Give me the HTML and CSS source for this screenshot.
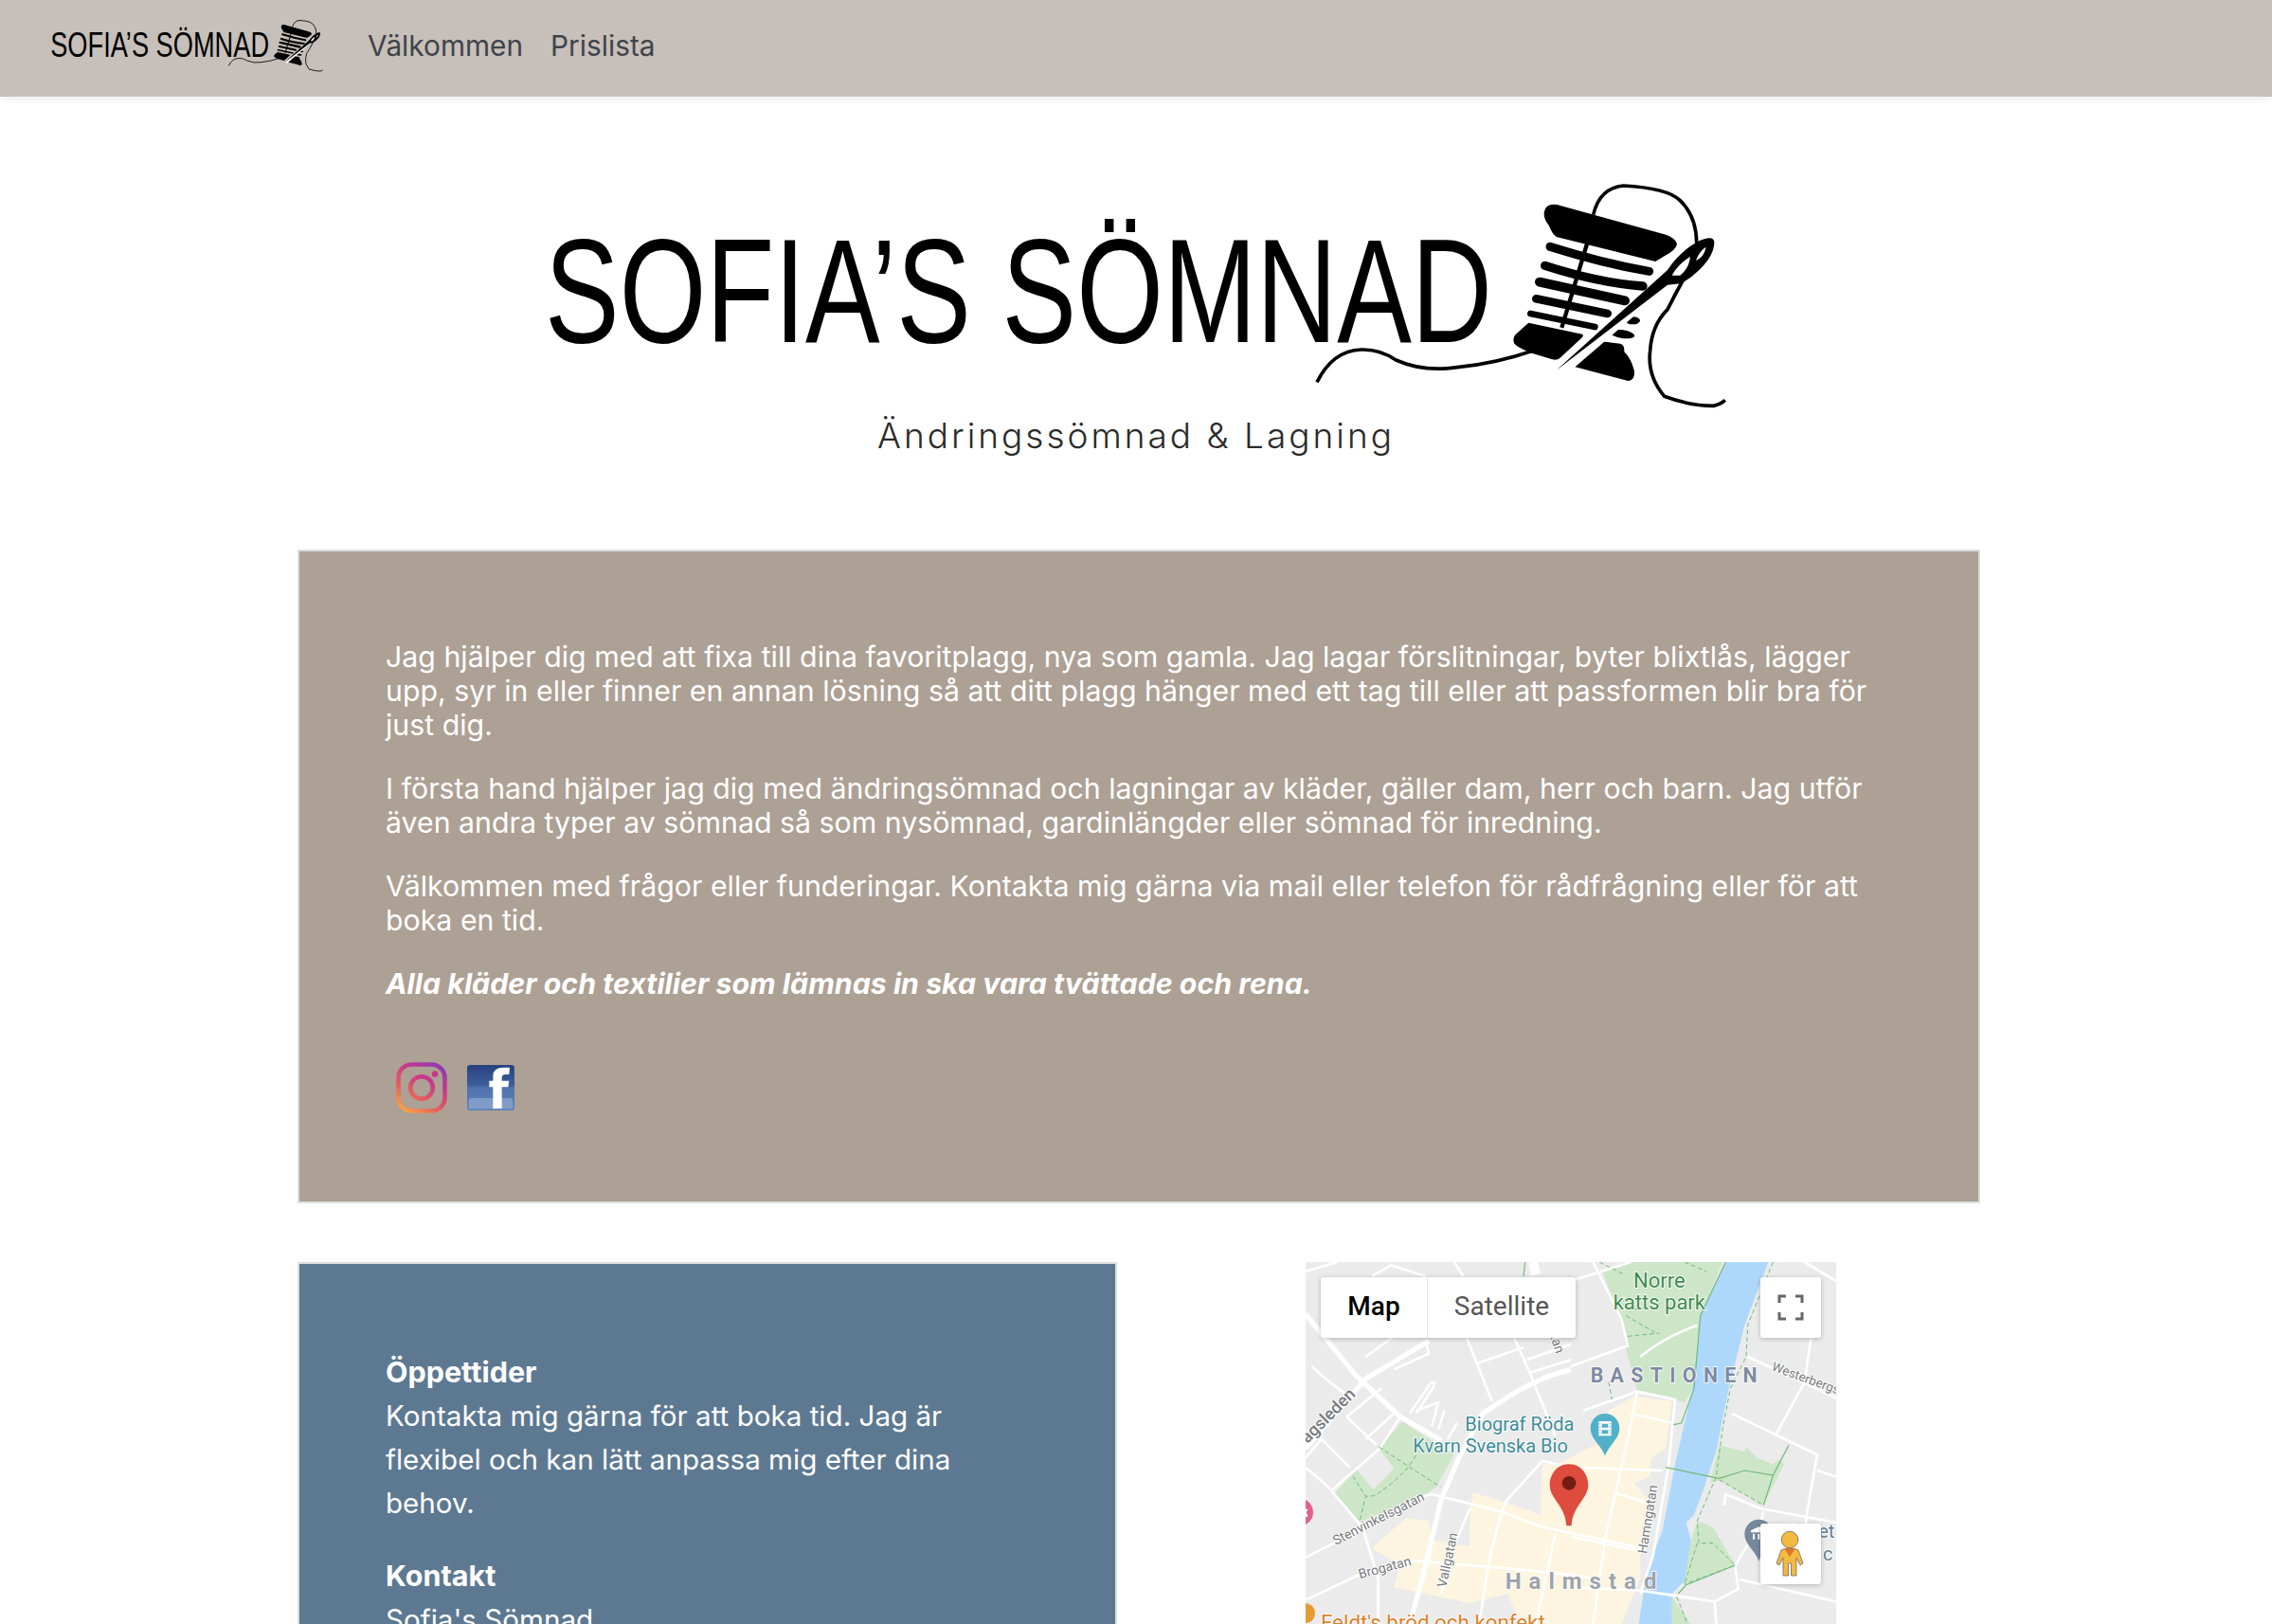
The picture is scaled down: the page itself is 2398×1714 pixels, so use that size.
FILE: index.html
```html
<!DOCTYPE html>
<html lang="sv">

<head>
    <meta charset="UTF-8">
    <meta name="viewport" content="width=device-width, initial-scale=1.0">
    <title>Sofia's Sömnad</title>
    <link rel="stylesheet" href="styles.css">
</head>

<body>
    <nav class="topbar">
        <svg class="topbar-logo" viewBox="574 190 1252 246"><use href="#logo-art"></use></svg>
        <a class="topbar-link" href="#">Välkommen</a>
        <a class="topbar-link" href="#">Prislista</a>
    </nav>

    <header class="hero">
        <svg class="hero-logo" viewBox="574 190 1252 246">
            <g id="logo-art">
                <text class="logo-text" x="575" y="361" textLength="1000" lengthAdjust="spacingAndGlyphs">SOFIA’S SÖMNAD</text>
                <!-- spool, coordinates are 3x from the logo corner -->
                <g transform="translate(1560 170) scale(.33333)">
                    <path class="logo-thread" d="M-510 700 Q-460 600 -370 597 Q-310 595 -260 630 Q-170 670 -60 652 Q60 640 175 600" />
                    <path d="M210 160 Q215 132 250 138 L595 233 Q628 246 630 264 Q625 282 595 298 L562 318 L248 240 Q235 232 225 205 Q205 180 210 160Z" />
                    <path class="logo-bar" stroke-width="27" d="M228 271 Q400 325 542 349" />
                    <path class="logo-bar" stroke-width="28" d="M212 331 Q380 385 522 396" />
                    <path class="logo-bar" stroke-width="30" d="M195 383 L465 442" />
                    <path class="logo-bar" stroke-width="26" d="M184 436 L410 483" />
                    <path class="logo-bar" stroke-width="20" d="M166 483 L370 525" />
                    <path class="logo-core" d="M345 262 L265 528" />
                    <path d="M160 512 L330 548 Q336 552 328 560 L258 625 Q250 632 235 628 L170 608 Q125 590 115 578 Q108 565 118 550 Z" />
                    <path d="M385 570 L450 578 Q465 582 463 604 Q485 625 495 665 Q497 695 475 696 L302 650 Z" />
                    <ellipse cx="490" cy="505" rx="23" ry="12" />
                    <ellipse cx="458" cy="548" rx="38" ry="13" transform="rotate(8 458 548)" />
                    <path class="logo-halo" d="M275 660 L640 345" />
                    <path d="M248 662 L600 345 Q635 290 695 255 Q745 232 748 256 Q748 300 700 345 Q670 375 640 388 L600 392 Z" />
                    <path class="logo-eye" d="M614 362 Q635 325 672 303 Q668 340 640 362 Z" />
                    <path class="logo-eye" d="M690 315 Q700 285 722 272 Q715 305 690 315 Z" />
                    <path class="logo-thread" d="M365 170 Q385 85 460 78 Q600 85 640 125 Q692 175 692 260 M650 375 Q625 420 600 470 Q550 520 545 600 Q535 680 590 745 Q670 775 745 775 Q770 770 782 757" />
                </g>
            </g>
        </svg>
        <p class="tagline">Ändringssömnad &amp; Lagning</p>
    </header>

    <main class="content">
        <section class="card card-intro">
            <p>Jag hjälper dig med att fixa till dina favoritplagg, nya som gamla. Jag lagar förslitningar, byter blixtlås, lägger upp, syr in eller finner en annan lösning så att ditt plagg hänger med ett tag till eller att passformen blir bra för just dig.</p>
            <p>I första hand hjälper jag dig med ändringsömnad och lagningar av kläder, gäller dam, herr och barn. Jag utför även andra typer av sömnad så som nysömnad, gardinlängder eller sömnad för inredning.</p>
            <p>Välkommen med frågor eller funderingar. Kontakta mig gärna via mail eller telefon för rådfrågning eller för att boka en tid.</p>
            <p><b><i>Alla kläder och textilier som lämnas in ska vara tvättade och rena.</i></b></p>
            <div class="social">
                <svg class="icon-insta" viewBox="0 0 54 54">
                    <defs>
                        <linearGradient id="insta" gradientUnits="userSpaceOnUse" x1="6" y1="54" x2="40" y2="0">
                            <stop offset="0" stop-color="#fbb040" />
                            <stop offset=".35" stop-color="#e8605a" />
                            <stop offset=".7" stop-color="#c8378c" />
                            <stop offset="1" stop-color="#8f3bb0" />
                        </linearGradient>
                    </defs>
                    <rect x="2.5" y="2.5" width="49" height="49" rx="14" fill="none" stroke="url(#insta)" stroke-width="4.5" />
                    <circle cx="27" cy="27" r="11.8" fill="none" stroke="url(#insta)" stroke-width="4.5" />
                    <circle cx="41" cy="12.5" r="3.3" fill="#c8378c" />
                </svg>
                <svg class="icon-fb" viewBox="0 0 150 144">
                    <defs>
                        <linearGradient id="fb" x1="0" y1="0" x2="0" y2="1">
                            <stop offset="0" stop-color="#26427f" />
                            <stop offset=".45" stop-color="#3d5f9c" />
                            <stop offset=".5" stop-color="#4f73ae" />
                            <stop offset="1" stop-color="#5f83bb" />
                        </linearGradient>
                    </defs>
                    <rect width="150" height="144" rx="10" fill="url(#fb)" />
                    <rect x="5" y="105" width="140" height="34" rx="8" fill="#8ca6cf" opacity=".75" />
                    <path fill="#fff" d="M82 138 L82 70 L70 70 L70 50 L82 50 L82 35 Q82 8 115 8 L135 8 L133 30 L122 30 Q110 30 110 40 L110 50 L133 50 L130 70 L110 70 L110 138 Z" />
                </svg>
            </div>
        </section>

        <div class="lower">
            <section class="card card-contact">
                <p><b>Öppettider</b><br>Kontakta mig gärna för att boka tid. Jag är flexibel och kan lätt anpassa mig efter dina behov.</p>
                <p><b>Kontakt</b><br>Sofia's Sömnad</p>
            </section>

            <div class="map">
                <svg class="map-canvas" viewBox="0 0 1680 1146">
                    <rect width="1680" height="1146" fill="#ebebeb" />
                    <path class="yellow" d="M960 470 L1040 425 L1160 440 L1140 590 L1095 620 L1090 680 L1040 700 L1090 760 L1060 900 L1060 1000 L1000 1146 L680 1146 L640 1050 L520 1080 L280 1030 L300 960 L210 905 L250 870 L320 810 L390 820 L400 880 L520 900 L520 790 L530 730 L630 760 L745 800 L745 720 L750 640 L800 640 L950 560 Z" />
                    <path class="park" d="M305 505 L470 610 L415 710 L390 730 L170 825 L90 735 L160 655 L215 720 L280 655 L232 590 Z" />
                    <path class="park" d="M940 30 L1010 0 L1320 0 L1250 180 L1240 260 L1225 400 L1200 445 L1050 405 L1015 280 L1005 200 Z" />
                    <path class="park" d="M1310 580 L1390 600 L1395 585 L1430 620 L1480 640 L1500 625 L1515 640 L1450 770 L1310 690 L1280 700 Z" />
                    <path class="park" d="M1240 820 L1290 840 L1360 960 L1200 1020 L1180 1010 L1220 885 Z" />
                    <path class="park" d="M1160 1060 L1220 1146 L1160 1146 Z" />
                    <path class="river" d="M1330 0 L1465 0 L1390 200 L1340 400 L1300 600 L1260 720 L1230 800 L1205 825 L1220 880 L1200 1010 L1160 1050 L1160 1146 L1055 1146 L1080 980 L1130 850 L1170 640 L1225 400 L1250 170 Z" />
                    <g class="road road-big">
                        <path d="M0 165 L160 360 L300 490 L430 565" />
                        <path d="M0 590 L190 370 L390 250" />
                        <path d="M840 340 C720 370 650 420 560 480 L490 610 L430 750 L370 1000 L330 1146" />
                        <path d="M720 0 L730 40" stroke-width="30" />
                    </g>
                    <g class="road">
                        <path d="M400 735 L620 790 L745 838 L1060 905 L1080 920" />
                        <path d="M0 935 L90 890 L380 740 L400 735" />
                        <path d="M0 1070 L170 990 L340 945 L640 970 L840 990 L900 1000" />
                        <path d="M0 650 L70 710 L180 840 L230 1000 L230 1146" />
                        <path d="M80 725 L235 590 L300 490" />
                        <path d="M130 490 L225 580 M190 560 L290 470 M130 490 L240 400 M0 620 L50 560 L140 650" />
                        <path d="M20 330 Q60 370 130 420" />
                        <path d="M330 480 L395 385 Q415 370 405 395 L350 480 M350 470 L420 445 L400 520 M440 470 L420 530 M480 510 L450 560" />
                        <path d="M510 240 L590 440 M545 320 L690 270 M660 240 L710 350 L790 550 M710 350 L840 310 M700 310 L840 260" />
                        <path d="M0 30 L100 0 M210 45 L270 10 L380 45 M470 0 L500 45" />
                        <path d="M280 340 L390 290 L380 250 M190 300 L330 200" />
                        <path d="M620 790 L640 750 L750 630 M620 790 L580 950 L550 1146 M520 780 L470 900 L430 1050" />
                        <path d="M750 630 L840 650 L1130 660" />
                        <path d="M790 860 L730 1146 M1050 410 L1020 560 L950 870 L910 1146" />
                        <path d="M880 470 L1050 410 L1170 435 L1150 640 L1100 930 L1060 1050" />
                        <path d="M1030 480 L1165 510 M975 730 L1090 765 M840 870 L1060 915" />
                        <path d="M840 1030 L1060 1040 L1295 1075 L1370 1035 L1360 960 L1440 830 L1450 790" />
                        <path d="M1295 1075 L1300 1146 M1375 1005 L1680 1075" />
                        <path d="M1325 770 L1330 735 L1440 780 L1680 825" />
                        <path d="M1350 480 L1620 610 L1590 780 L1560 1000 M1620 660 L1680 680 M1490 545 L1580 380 L1600 240 M1400 300 L1680 430 M1580 0 L1680 60" />
                        <path d="M910 0 L1000 180 L1020 265 L840 330 M840 60 L1030 0 M1060 300 Q1130 240 1240 200" />
                    </g>
                    <g class="trail">
                        <path d="M232 585 L330 650 L428 712 M350 612 L325 650 L280 695 L220 740 L190 742 L170 825 M150 678 L190 742" />
                        <path d="M930 0 L1010 40 M1015 170 L1110 225 M1020 235 L1120 225 M1200 0 L1270 30 M1040 150 L1130 130 M960 380 L970 435" />
                        <path d="M1480 0 L1400 200 L1395 300 L1345 400 L1320 530 L1300 680 L1240 820 L1245 890 L1290 890 L1360 960 L1200 1020 M1240 890 L1200 1020 M1310 690 L1450 770" />
                        <path d="M1175 1060 L1210 1146" />
                    </g>
                    <g class="path-line">
                        <path d="M1330 0 L1250 170 L1230 400 L1190 510 L1165 515" />
                        <path d="M1140 650 L1310 685 L1390 660 L1480 675 L1530 580 M1480 675 L1450 770" />
                        <path d="M1360 960 L1205 1022 L1180 1050" />
                        <path d="M695 0 L690 45" />
                    </g>

                    <!-- road and area names -->
                    <text class="label-road" transform="translate(95 897) rotate(-27)">Stenvinkelsgatan</text>
                    <text class="label-road" transform="translate(172 1003) rotate(-15)">Brogatan</text>
                    <text class="label-road" transform="translate(445 1032) rotate(-78)">Vallgatan</text>
                    <text class="label-road" transform="translate(1080 925) rotate(-81)">Hamngatan</text>
                    <text class="label-road label-west" transform="translate(1474 342) rotate(20)">Westerbergs</text>
                    <text class="label-road label-bold" transform="translate(-18 600) rotate(-45)">Vägsleden</text>
                    <text class="label-road" transform="translate(760 190) rotate(72)">gatan</text>
                    <text class="label-park" x="1120" y="82">Norre</text>
                    <text class="label-park" x="1120" y="150">katts park</text>
                    <text class="label-area" x="902" y="380">BASTIONEN</text>
                    <text class="label-town" x="632" y="1034">Halmstad</text>
                    <text class="label-poi" x="505" y="535">Biograf Röda</text>
                    <text class="label-poi" x="340" y="603">Kvarn Svenska Bio</text>
                    <text class="label-food" x="48" y="1163">Feldt's bröd och konfekt</text>
                    <text class="label-museum" x="1500" y="872">Slottet</text>
                    <text class="label-museum" x="1638" y="945">c</text>

                    <!-- markers -->
                    <path fill="#52b0c9" d="M948 480 C920 480 902 502 902 526 C902 560 935 580 948 613 C961 580 994 560 994 526 C994 502 976 480 948 480Z" />
                    <path fill="#fff" d="M928 504 H968 V550 H928Z" />
                    <path fill="#52b0c9" d="M938 512 H958 V524 H938Z M938 532 H958 V544 H938Z M931 510 H934 V514 H931Z M962 510 H965 V514 H962Z M931 520 H934 V524 H931Z M962 520 H965 V524 H962Z M931 530 H934 V534 H931Z M962 530 H965 V534 H962Z M931 540 H934 V544 H931Z M962 540 H965 V544 H962Z" />
                    <circle cx="-20" cy="792" r="44" fill="#e0618f" />
                    <path fill="#fff" d="M0 782 L8 782 L2 792 L8 806 L0 806Z" />
                    <path fill="#76899c" d="M1435 815 C1408 815 1390 838 1390 862 C1390 895 1425 915 1435 947 C1445 915 1480 895 1480 862 C1480 838 1462 815 1435 815Z" />
                    <path fill="#fff" d="M1410 850 L1435 838 L1460 850 V856 H1410Z M1416 860 H1422 V878 H1416Z M1432 860 H1438 V878 H1432Z M1448 860 H1454 V878 H1448Z" />
                    <circle cx="-2" cy="1112" r="32" fill="#e79a2f" />
                    <path fill="#dd4c3d" d="M834 640 C790 640 773 680 773 705 C773 750 822 770 826 835 L842 835 C846 770 895 750 895 705 C895 680 878 640 834 640Z" />
                    <circle cx="834" cy="700" r="22" fill="#751c12" />
                </svg>

                <div class="map-switch">
                    <span class="map-btn map-btn-on">Map</span>
                    <span class="map-btn">Satellite</span>
                </div>
                <div class="map-tool map-full">
                    <svg viewBox="0 0 64 64"><path fill="none" stroke="#666" stroke-width="3" d="M20 27 V20 H27 M37 20 H44 V27 M44 37 V44 H37 M27 44 H20 V37" /></svg>
                </div>
                <div class="map-tool map-peg">
                    <svg viewBox="0 0 64 64">
                        <circle cx="31" cy="17" r="8.8" fill="#f4b93f" stroke="#6b6b6b" stroke-width=".8" />
                        <path fill="#f4b93f" stroke="#6b6b6b" stroke-width=".8" d="M22 28 Q31 24 40 28 L45 42 L42 44 L38 36 L38 55 L32.5 55 L32.5 42 L29.5 42 L29.5 55 L24 55 L24 36 L20 44 L17 42Z" />
                        <path fill="#d9772f" d="M25 26 L37 26 L31 35Z" />
                    </svg>
                </div>
            </div>
        </div>
    </main>
</body>

</html>
```

FILE: styles.css
```css
html,
body {
    height: 100%;
    overflow: hidden;
}

body {
    margin: 0;
    background: #fff;
    font-family: Inter, "Noto Sans", sans-serif;
    font-size: 30px;
    color: #fff;
}

p {
    margin: 0 0 31px;
}

.topbar {
    box-sizing: border-box;
    height: 102px;
    display: flex;
    align-items: center;
    padding: 0 0 6px 53px;
    background: #c7bfb9;
    box-shadow: 0 2px 8px rgba(0, 0, 0, .08);
}

.topbar-logo {
    width: 289px;
    height: 57px;
    margin-right: 46px;
}

.topbar-link {
    margin-right: 29px;
    font-size: 29.8px;
    color: #3f444a;
    text-decoration: none;
}

.hero {
    padding-top: 88px;
    text-align: center;
}

.hero-logo {
    display: block;
    width: 1252px;
    height: 246px;
    margin-left: 574px;
}

.logo-text {
    font-family: "Liberation Sans", sans-serif;
    font-size: 156px;
    fill: #000;
}

.logo-thread {
    fill: none;
    stroke: #000;
    stroke-width: 11;
}

.logo-bar {
    fill: none;
    stroke: #000;
    stroke-linecap: round;
}

.logo-core {
    fill: none;
    stroke: #000;
    stroke-width: 13;
}

.logo-halo {
    fill: none;
    stroke: #fff;
    stroke-width: 30;
}

.logo-eye {
    fill: #fff;
}

.tagline {
    margin: 0;
    font-size: 37px;
    font-weight: 300;
    letter-spacing: 3px;
    line-height: 48px;
    color: #2b2b2b;
}

.content {
    width: 1776px;
    margin: 96px 0 0 314px;
}

.card {
    box-sizing: border-box;
    border: 2px solid #dcdee0;
}

.card-intro {
    height: 690px;
    padding: 93px 90px 0 91px;
    background: #ada094;
    font-size: 30.3px;
    line-height: 36px;
}

.social {
    display: flex;
    align-items: center;
    gap: 21px;
    margin: 65px 0 0 11px;
}

.icon-insta {
    width: 54px;
    height: 54px;
}

.icon-fb {
    width: 50px;
    height: 48px;
}

.lower {
    display: flex;
    align-items: flex-start;
    gap: 199px;
    margin-top: 62px;
}

.card-contact {
    width: 865px;
    height: 600px;
    padding: 91px 92px 0 91px;
    background: #5d7992;
    font-size: 29.6px;
    line-height: 46px;
}

.card-contact b {
    font-size: 30.5px;
}

.map {
    position: relative;
    width: 560px;
    height: 382px;
    overflow: hidden;
}

.map-canvas {
    display: block;
    width: 560px;
    height: 382px;
}

.yellow {
    fill: #fdf5df;
}

.park {
    fill: #cde6c8;
}

.river {
    fill: #aed8fb;
}

.road {
    fill: none;
    stroke: #fff;
    stroke-width: 8;
}

.road-big {
    stroke-width: 16;
}

.trail {
    fill: none;
    stroke: #70b878;
    stroke-width: 3;
    stroke-dasharray: 14 9;
}

.path-line {
    fill: none;
    stroke: #70b878;
    stroke-width: 3.5;
}

.map-canvas text {
    font-family: Roboto, sans-serif;
    paint-order: stroke;
    stroke: #fff;
    stroke-width: 5px;
}

.map-canvas .label-road {
    font-size: 42px;
    fill: #77797c;
}

.map-canvas .label-west {
    font-size: 40px;
}

.map-canvas .label-bold {
    font-size: 54px;
    font-weight: 500;
}

.map-canvas .label-park {
    font-size: 66px;
    fill: #3f8a4e;
    text-anchor: middle;
}

.map-canvas .label-area {
    font-size: 64px;
    font-weight: 700;
    letter-spacing: 22px;
    fill: #7e8aa3;
}

.map-canvas .label-town {
    font-size: 72px;
    font-weight: 700;
    letter-spacing: 24px;
    fill: #9ea3ad;
}

.map-canvas .label-poi {
    font-size: 60px;
    fill: #3d8c99;
}

.map-canvas .label-food {
    font-size: 67px;
    fill: #d9822b;
}

.map-canvas .label-museum {
    font-size: 60px;
    fill: #667c8f;
}

.map-switch {
    position: absolute;
    top: 16px;
    left: 16px;
    display: flex;
    height: 64px;
    border-radius: 3px;
    background: #fff;
    box-shadow: 0 1px 5px rgba(0, 0, 0, .25);
    font-family: Roboto, sans-serif;
    font-size: 28px;
    line-height: 62px;
    color: #565656;
}

.map-btn {
    width: 156px;
    text-align: center;
}

.map-btn-on {
    width: 112px;
    border-right: 1px solid #e6e6e6;
    font-weight: 500;
    color: #000;
}

.map-tool {
    position: absolute;
    left: 480px;
    width: 64px;
    height: 64px;
    border-radius: 3px;
    background: #fff;
    box-shadow: 0 1px 5px rgba(0, 0, 0, .25);
}

.map-full {
    top: 16px;
}

.map-peg {
    top: 276px;
}
```
